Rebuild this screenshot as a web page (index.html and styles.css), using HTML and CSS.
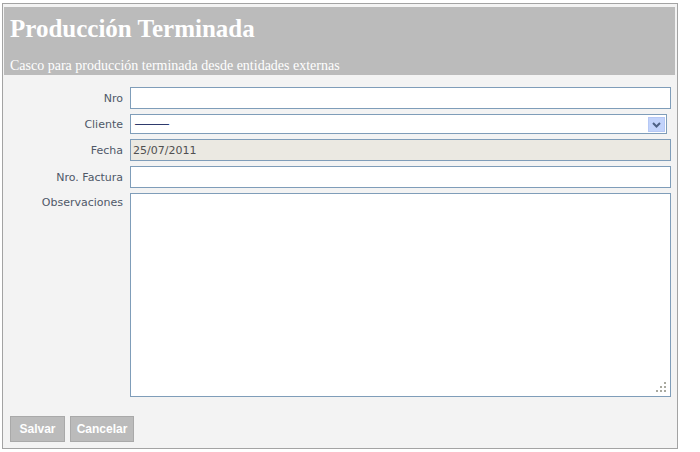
FILE: index.html
```html
<!DOCTYPE html>
<html lang="es">
<head>
<meta charset="utf-8">
<title>Producción Terminada</title>
<link rel="stylesheet" href="styles.css">
</head>
<body>
<div class="panel">
  <div class="header">
    <h1 class="title">Producción Terminada</h1>
    <p class="subtitle">Casco para producción terminada desde entidades externas</p>
  </div>
  <form class="form">
    <label class="lbl" for="nro">Nro</label>
    <input class="field" id="nro" type="text">

    <label class="lbl" for="cliente">Cliente</label>
    <div class="select-wrap">
      <div class="select" id="cliente"><span class="dash">———</span></div>
      <span class="select-btn">
        <svg width="9" height="6" viewBox="0 0 9 6"><path d="M1 1 L4.5 4.5 L8 1" fill="none" stroke="#4d6185" stroke-width="2"/></svg>
      </span>
    </div>

    <label class="lbl" for="fecha">Fecha</label>
    <input class="field field-ro" id="fecha" type="text" value="25/07/2011" readonly>

    <label class="lbl" for="factura">Nro. Factura</label>
    <input class="field" id="factura" type="text">

    <label class="lbl lbl-top" for="obs">Observaciones</label>
    <div class="area-wrap">
      <textarea class="area" id="obs"></textarea>
      <svg class="grip" width="11" height="11" viewBox="0 0 11 11">
        <rect x="9" y="0" width="2" height="2" fill="#a9a99f"/>
        <rect x="5" y="4" width="2" height="2" fill="#a9a99f"/>
        <rect x="9" y="4" width="2" height="2" fill="#a9a99f"/>
        <rect x="1" y="8" width="2" height="2" fill="#a9a99f"/>
        <rect x="5" y="8" width="2" height="2" fill="#a9a99f"/>
        <rect x="9" y="8" width="2" height="2" fill="#a9a99f"/>
      </svg>
    </div>
  </form>
  <div class="buttons">
    <button class="btn btn-save" type="button">Salvar</button>
    <button class="btn btn-cancel" type="button">Cancelar</button>
  </div>
</div>
</body>
</html>
```
FILE: styles.css
```css
html, body {
  margin: 0;
  padding: 0;
  background: #ffffff;
}
.panel {
  box-sizing: border-box;
  margin: 3px 0 0 2px;
  width: 676px;
  height: 446px;
  border: 1px solid #a3a3a3;
  background: #f3f3f3;
  padding: 3px 2px 0 1px;
}
.header {
  background: #bbbbbb;
  height: 68px;
  padding: 0 0 0 6px;
  color: #ffffff;
  font-family: "Liberation Serif", "Times New Roman", serif;
}
.title {
  margin: 0;
  padding-top: 7px;
  font-size: 25px;
  line-height: 29px;
  font-weight: bold;
}
.subtitle {
  margin: 0;
  padding-top: 15px;
  font-size: 14px;
  line-height: 16px;
}
.form {
  display: grid;
  grid-template-columns: 119px 541px;
  column-gap: 7px;
  row-gap: 5px;
  padding-top: 12px;
  font-family: "DejaVu Sans", Tahoma, sans-serif;
  font-size: 11px;
}
.lbl {
  color: #4f5868;
  text-align: right;
  align-self: center;
}
.lbl-top {
  align-self: start;
  padding-top: 3px;
}
.field {
  box-sizing: border-box;
  height: 22px;
  margin: 0;
  border: 1px solid #7f9db9;
  background: #ffffff;
  font-family: "DejaVu Sans", Tahoma, sans-serif;
  font-size: 11px;
  color: #505050;
  padding: 0 2px;
  outline: none;
}
.field-ro {
  background: #ebe9e2;
}
.select-wrap {
  position: relative;
  width: 537px;
  height: 20px;
}
.select {
  box-sizing: border-box;
  height: 20px;
  border: 1px solid #7f9db9;
  background: #ffffff;
  color: #2e3a6c;
  padding: 0 4px;
  line-height: 18px;
}
.dash {
  font-family: "Liberation Sans", Arial, sans-serif;
  font-size: 12px;
  letter-spacing: -1px;
}
.select-btn {
  position: absolute;
  right: 2px;
  top: 3px;
  width: 17px;
  height: 15px;
  box-sizing: border-box;
  background: #c2d3fb;
  border: 1px solid #b6c8f5;
  display: flex;
  align-items: center;
  justify-content: center;
}
.area-wrap {
  position: relative;
  height: 204px;
}
.area {
  box-sizing: border-box;
  display: block;
  width: 541px;
  height: 204px;
  margin: 0;
  border: 1px solid #7f9db9;
  background: #ffffff;
  resize: none;
  outline: none;
}
.grip {
  position: absolute;
  right: 5px;
  bottom: 4px;
}
.buttons {
  display: flex;
  gap: 5px;
  padding: 19px 0 0 6px;
}
.btn {
  box-sizing: border-box;
  height: 26px;
  margin: 0;
  border: 1px solid #a9a9a9;
  background: #bbbbbb;
  color: #ffffff;
  font-family: "Liberation Sans", Arial, sans-serif;
  font-weight: bold;
  font-size: 12px;
  padding: 0;
}
.btn-save {
  width: 55px;
}
.btn-cancel {
  width: 64px;
}
```
